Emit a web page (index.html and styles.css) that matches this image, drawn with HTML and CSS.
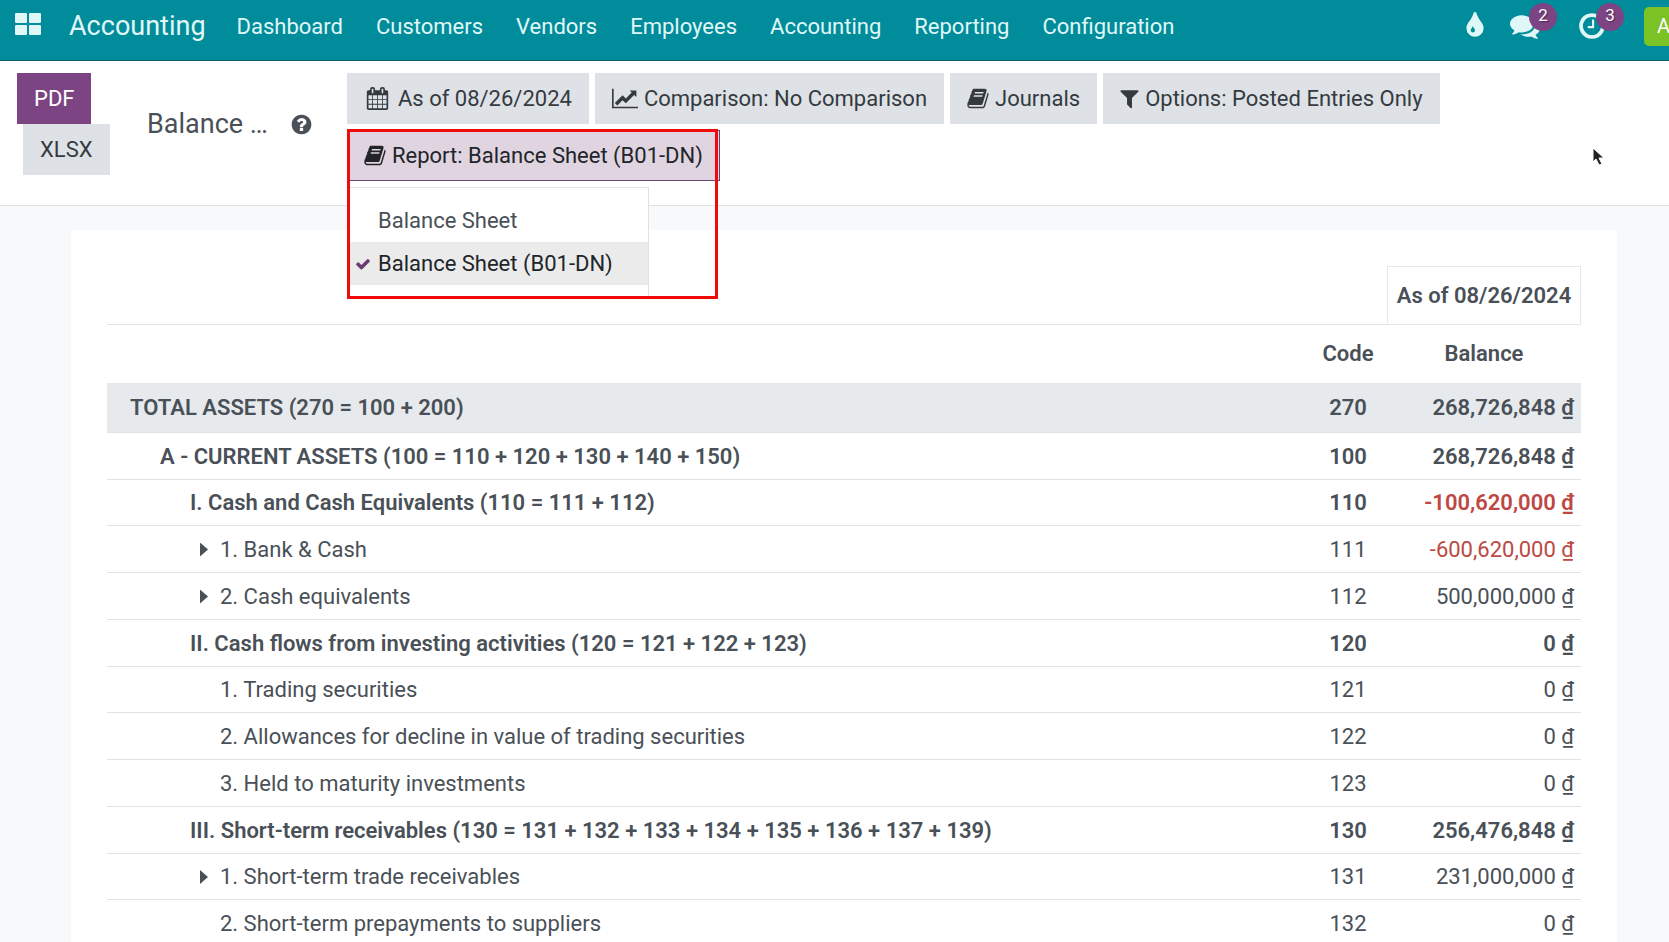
FILE: index.html
```html
<!DOCTYPE html>
<html lang="en">
<head>
    <meta charset="UTF-8">
    <meta name="viewport" content="width=device-width, initial-scale=1.0">
    <title>Balance Sheet (B01-DN)</title>
    <link rel="stylesheet" href="styles.css">
</head>
<body>
    <!-- Shared icon shapes -->
    <svg class="icon-defs" aria-hidden="true">
        <symbol id="icon-book" viewBox="60 0 1680 1792">
            <path d="M1703 478q40 57 18 129l-275 906q-19 64-76.5 107.5t-122.5 43.5h-923q-77 0-148.5-53.5t-99.5-131.5q-24-67-2-127 0-4 3-27t4-37q1-8-3-21.5t-3-19.5q2-11 8-21t16.5-23.5 16.5-23.5q23-38 45-91.5t30-91.5q3-10 .5-30t-.5-28q3-11 17-28t17-23q21-36 42-92t25-90q1-9-2.5-32t.5-28q4-13 22-30.5t22-22.5q19-26 42.5-84.5t27.5-96.5q1-8-3-25.5t-2-26.5q2-8 9-18t18-23 17-21q8-12 16.5-30.5t15-35 16-36 19.5-32 26.5-23.5 36-11.5 47.5 5.5l-1 3q38-9 51-9h761q74 0 114 56t18 130l-274 906q-36 119-71.5 153.5t-128.5 34.5h-869q-27 0-38 15-11 16-1 43 24 70 144 70h923q29 0 56-15.5t35-41.5l300-987q7-22 5-57 38 15 59 43zm-1064 2q-4 13 2 22.5t20 9.5h608q13 0 25.5-9.5t16.5-22.5l21-64q4-13-2-22.5t-20-9.5h-608q-13 0-25.5 9.5t-16.5 22.5zm-83 256q-4 13 2 22.5t20 9.5h608q13 0 25.5-9.5t16.5-22.5l21-64q4-13-2-22.5t-20-9.5h-608q-13 0-25.5 9.5t-16.5 22.5z"/>
        </symbol>
    </svg>

    <!-- Navbar -->
    <header class="navbar">
        <button class="apps-btn" aria-label="Apps">
            <svg width="26" height="22" viewBox="0 0 26 22">
                <rect x="0" y="0" width="12" height="10" rx="1"/>
                <rect x="14" y="0" width="12" height="10" rx="1"/>
                <rect x="0" y="12" width="12" height="10" rx="1"/>
                <rect x="14" y="12" width="12" height="10" rx="1"/>
            </svg>
        </button>
        <a href="#" class="brand">Accounting</a>
        <nav class="menu">
            <a href="#">Dashboard</a>
            <a href="#">Customers</a>
            <a href="#">Vendors</a>
            <a href="#">Employees</a>
            <a href="#">Accounting</a>
            <a href="#">Reporting</a>
            <a href="#">Configuration</a>
        </nav>
        <div class="systray">
            <button class="tray-btn drop-btn" aria-label="Theme">
                <svg class="tray-icon" viewBox="0 0 1792 1792"><path d="M896 1152q0-36-20-69-1-1-15.500-22.500t-25.500-38-25-44-21-50.500q-4-16-21-16t-21 16q-7 23-21 50.500t-25 44-25.500 38-15.500 22.500q-20 33-20 69 0 53 37.500 90.500t90.500 37.500 90.500-37.500 37.500-90.500zm512-128q0 212-150 362t-362 150-362-150-150-362q0-145 81-275 6-9 62.500-90.500t101-151 99.500-178 83-201.500q9-30 34-47t51-17 51.500 17 33.500 47q28 93 83 201.500t99.500 178 101 151 62.500 90.500q81 127 81 275z"/></svg>
            </button>
            <button class="tray-btn" aria-label="Messages">
                <svg class="tray-icon" viewBox="0 0 1792 1792"><path d="M1408 768q0 139-94 257t-256.500 186.500-353.500 68.500q-86 0-176-16-124 88-278 128-36 9-86 16h-3q-11 0-20.500-8t-11.500-21q-1-3-1-6.500t.5-6.500 2-6l2.500-5 3.500-5.500 4-5 4.500-5 4-4.500q5-6 23-25t26-29.500 22.500-29 25-38.500 20.500-44q-124-72-195-177t-71-224q0-139 94-257t256.500-186.500 353.500-68.500 353.500 68.500 256.500 186.500 94 257zm384 256q0 120-71 224.500t-195 176.500q10 24 20.500 44t25 38.500 22.500 29 26 29.500 23 25q1 1 4 4.500t4.500 5 4 5 3.500 5.500l2.500 5 2 6 .5 6.500-1 6.500q-3 14-13 22t-22 7q-50-7-86-16-154-40-278-128-90 16-176 16-271 0-472-132 58 4 88 4 161 0 309-45t264-129q125-92 192-212t67-254q0-77-23-152 129 71 204 178t75 230z"/></svg>
                <span class="badge">2</span>
            </button>
            <button class="tray-btn" aria-label="Activities">
                <svg class="tray-icon" viewBox="0 0 1792 1792"><path d="M1024 544v448q0 14-9 23t-23 9h-320q-14 0-23-9t-9-23v-64q0-14 9-23t23-9h224v-352q0-14 9-23t23-9h64q14 0 23 9t9 23zm416 352q0-148-73-273t-198-198-273-73-273 73-198 198-73 273 73 273 198 198 273 73 273-73 198-198 73-273zm224 0q0 209-103 385.500t-279.500 279.500-385.500 103-385.500-103-279.500-279.500-103-385.500 103-385.500 279.500-279.500 385.500-103 385.500 103 279.500 279.500 103 385.500z"/></svg>
                <span class="badge">3</span>
            </button>
            <button class="avatar" aria-label="User">A</button>
        </div>
    </header>

    <!-- Control panel -->
    <section class="control-panel">
        <div class="export-buttons">
            <button class="btn btn-primary">PDF</button>
            <button class="btn btn-xlsx">XLSX</button>
        </div>
        <div class="title">
            <h1>Balance …</h1>
            <button class="help-btn" aria-label="Help">
                <svg class="icon" viewBox="0 0 1792 1792"><path d="M1024 1376v-192q0-14-9-23t-23-9h-192q-14 0-23 9t-9 23v192q0 14 9 23t23 9h192q14 0 23-9t9-23zm256-672q0-88-55.500-163t-138.500-116-170-41q-243 0-371 213-15 24 8 42l132 100q7 6 19 6 16 0 25-12 53-68 86-92 34-24 86-24 48 0 85.500 26t37.500 59q0 38-20 61t-68 45q-63 28-115.500 86.500t-52.500 125.500v36q0 14 9 23t23 9h192q14 0 23-9t9-23q0-19 21.500-49.500t54.500-49.500q32-18 49-28.500t46-35 44.500-48 28-60.500 12.500-81zm384 192q0 209-103 385.500t-279.500 279.500-385.500 103-385.500-103-279.500-279.500-103-385.500 103-385.500 279.500-279.500 385.500-103 385.500 103 279.500 279.500 103 385.500z"/></svg>
            </button>
        </div>
        <div class="filters">
            <button class="btn btn-date">
                <svg class="icon" viewBox="0 0 1792 1792"><path d="M192 1664h288v-288h-288v288zm352 0h320v-288h-320v288zm-352-352h288v-320h-288v320zm352 0h320v-320h-320v320zm-352-384h288v-288h-288v288zm736 736h320v-288h-320v288zm-384-736h320v-288h-320v288zm768 736h288v-288h-288v288zm-384-352h320v-320h-320v320zm-352-864v-288q0-13-9.500-22.500t-22.500-9.500h-64q-13 0-22.500 9.500t-9.500 22.500v288q0 13 9.500 22.500t22.500 9.500h64q13 0 22.500-9.500t9.500-22.500zm736 864h288v-320h-288v320zm-384-384h320v-288h-320v288zm384 0h288v-288h-288v288zm32-480v-288q0-13-9.500-22.500t-22.500-9.500h-64q-13 0-22.500 9.500t-9.500 22.500v288q0 13 9.500 22.500t22.500 9.500h64q13 0 22.500-9.500t9.500-22.500zm384-64v1280q0 52-38 90t-90 38h-1408q-52 0-90-38t-38-90v-1280q0-52 38-90t90-38h128v-96q0-66 47-113t113-47h64q66 0 113 47t47 113v96h384v-96q0-66 47-113t113-47h64q66 0 113 47t47 113v96h128q52 0 90 38t38 90z"/></svg>
                As of 08/26/2024
            </button>
            <button class="btn">
                <svg class="icon icon-wide" viewBox="0 0 2048 1792"><path d="M2048 1536v128h-2048v-1536h128v1408h1920zm-128-1248v435q0 21-19.500 29.500t-35.500-7.500l-121-121-633 633q-10 10-23 10t-23-10l-233-233-416 416-192-192 585-585q10-10 23-10t23 10l233 233 464-464-121-121q-16-16-7.500-35.500t29.500-19.500h435q14 0 23 9t9 23z"/></svg>
                Comparison: No Comparison
            </button>
            <button class="btn">
                <svg class="icon icon-book"><use href="#icon-book"/></svg>
                Journals
            </button>
            <button class="btn">
                <svg class="icon icon-narrow" viewBox="160 0 1472 1792"><path d="M1595 295q17 41-14 70l-493 493v742q0 42-39 59-13 5-25 5-27 0-45-19l-256-256q-19-19-19-45v-486l-493-493q-31-29-14-70 17-39 59-39h1280q42 0 59 39z"/></svg>
                Options: Posted Entries Only
            </button>
            <div class="dropdown">
                <button class="btn btn-open" aria-expanded="true">
                    <svg class="icon icon-book"><use href="#icon-book"/></svg>
                    Report: Balance Sheet (B01-DN)
                </button>
                <div class="dropdown-menu">
                    <a href="#">Balance Sheet</a>
                    <a href="#" class="selected">
                        <svg class="check" viewBox="0 0 1792 1792"><path d="M1671 566q0 40-28 68l-724 724-136 136q-28 28-68 28t-68-28l-136-136-362-362q-28-28-28-68t28-68l136-136q28-28 68-28t68 28l294 295 656-657q28-28 68-28t68 28l136 136q28 28 28 68z"/></svg>
                        Balance Sheet (B01-DN)
                    </a>
                </div>
                <div class="highlight"></div>
            </div>
        </div>
        <svg class="cursor" width="14" height="20" viewBox="0 0 14 20" aria-hidden="true">
            <path d="M1 1v14l3-3 3 6 3-1-3-6h5z"/>
        </svg>
    </section>

    <!-- Report -->
    <main class="sheet">
        <table>
            <colgroup>
                <col>
                <col class="col-code">
                <col class="col-balance">
            </colgroup>
            <thead>
                <tr class="period">
                    <th></th>
                    <th></th>
                    <th class="period-cell">As of 08/26/2024</th>
                </tr>
                <tr class="labels">
                    <th></th>
                    <th>Code</th>
                    <th>Balance</th>
                </tr>
            </thead>
            <tbody>
                <tr class="total">
                    <td class="level-0">TOTAL ASSETS (270 = 100 + 200)</td>
                    <td>270</td>
                    <td>268,726,848 ₫</td>
                </tr>
                <tr class="bold">
                    <td class="level-1">A - CURRENT ASSETS (100 = 110 + 120 + 130 + 140 + 150)</td>
                    <td>100</td>
                    <td>268,726,848 ₫</td>
                </tr>
                <tr class="bold">
                    <td class="level-2">I. Cash and Cash Equivalents (110 = 111 + 112)</td>
                    <td>110</td>
                    <td class="negative">-100,620,000 ₫</td>
                </tr>
                <tr>
                    <td class="level-3 foldable">1. Bank &amp; Cash</td>
                    <td>111</td>
                    <td class="negative">-600,620,000 ₫</td>
                </tr>
                <tr>
                    <td class="level-3 foldable">2. Cash equivalents</td>
                    <td>112</td>
                    <td>500,000,000 ₫</td>
                </tr>
                <tr class="bold">
                    <td class="level-2">II. Cash flows from investing activities (120 = 121 + 122 + 123)</td>
                    <td>120</td>
                    <td>0 ₫</td>
                </tr>
                <tr>
                    <td class="level-3">1. Trading securities</td>
                    <td>121</td>
                    <td>0 ₫</td>
                </tr>
                <tr>
                    <td class="level-3">2. Allowances for decline in value of trading securities</td>
                    <td>122</td>
                    <td>0 ₫</td>
                </tr>
                <tr>
                    <td class="level-3">3. Held to maturity investments</td>
                    <td>123</td>
                    <td>0 ₫</td>
                </tr>
                <tr class="bold">
                    <td class="level-2">III. Short-term receivables (130 = 131 + 132 + 133 + 134 + 135 + 136 + 137 + 139)</td>
                    <td>130</td>
                    <td>256,476,848 ₫</td>
                </tr>
                <tr>
                    <td class="level-3 foldable">1. Short-term trade receivables</td>
                    <td>131</td>
                    <td>231,000,000 ₫</td>
                </tr>
                <tr>
                    <td class="level-3">2. Short-term prepayments to suppliers</td>
                    <td>132</td>
                    <td>0 ₫</td>
                </tr>
            </tbody>
        </table>
    </main>
</body>
</html>
```
FILE: styles.css
```css
* {
    margin: 0;
    padding: 0;
    box-sizing: border-box;
}

body {
    background-color: #f8f9fb;
    color: #495057;
    font-family: Roboto, sans-serif;
    font-size: 22px;
    line-height: 33px;
    height: 100vh;
    overflow: hidden;
}

button {
    font: inherit;
    color: inherit;
    background: none;
    border: none;
    cursor: pointer;
}

a {
    color: inherit;
    text-decoration: none;
}

svg {
    fill: currentColor;
}

.icon-defs {
    display: none;
}

.icon {
    width: 23px;
    height: 23px;
    flex: none;
}

.icon-wide {
    width: 26px;
}

.icon-book {
    width: 22px;
}

.icon-narrow {
    width: 19px;
}

/* Navbar */
.navbar {
    display: flex;
    align-items: center;
    height: 61px;
    padding: 0 0 8px 15px;
    background-color: #008c9a;
    border-bottom: 1px solid #0b5f68;
    color: #e0f7f8;
}

.apps-btn {
    display: flex;
    margin-right: 28px;
    padding-bottom: 5px;
}

.brand {
    font-size: 27px;
    margin-right: 31px;
}

.menu {
    display: flex;
    flex: 1;
    gap: 33px;
}

.systray {
    display: flex;
    flex: none;
    align-items: center;
    gap: 37px;
    width: 209px;
}

.tray-btn {
    display: flex;
    flex: none;
    position: relative;
}

.drop-btn {
    margin-right: -17px;
}

.tray-icon {
    width: 30px;
    height: 30px;
}

.badge {
    position: absolute;
    top: -8px;
    right: -17px;
    width: 28px;
    height: 28px;
    border-radius: 50%;
    background-color: #7c4483;
    color: #fff;
    font-size: 17px;
    line-height: 24px;
    text-align: center;
    text-shadow: 1px 1px 1px rgba(0, 0, 0, 0.4);
}

.avatar {
    flex: none;
    width: 39px;
    height: 39px;
    border-radius: 5px;
    background-color: #7bc225;
    color: #fff;
    font-size: 20px;
}

/* Control panel */
.control-panel {
    display: grid;
    grid-template-columns: 130px 200px 1fr;
    align-items: start;
    position: relative;
    padding: 12px 17px 24px;
    background-color: #fff;
    border-bottom: 1px solid #dee2e6;
}

.export-buttons {
    display: flex;
    flex-direction: column;
    align-items: flex-start;
}

.btn {
    display: flex;
    align-items: center;
    gap: 6px;
    height: 51px;
    padding: 0 17px;
    background-color: #dee2e6;
    color: #343a40;
    white-space: nowrap;
}

.btn-primary {
    background-color: #7c4483;
    color: #fff;
}

.btn-xlsx {
    margin-left: 6px;
}

.btn-date {
    gap: 9px;
    padding-left: 19px;
}

.title {
    display: flex;
    align-items: center;
    gap: 22px;
    height: 102px;
}

.title h1 {
    font-size: 27px;
    font-weight: 400;
}

.help-btn {
    display: flex;
}

.filters {
    display: flex;
    flex-wrap: wrap;
    gap: 6px;
}

/* Report picker */
.dropdown {
    position: relative;
}

.btn-open {
    background-color: #e0d4e1;
    border: 1px solid #6d4474;
    padding: 0 16px;
    color: #212529;
}

.dropdown-menu {
    position: absolute;
    top: 57px;
    left: 0;
    z-index: 1;
    width: 302px;
    padding: 11px 0;
    background-color: #fff;
    border: 1px solid #dee2e6;
}

.dropdown-menu a {
    display: flex;
    align-items: center;
    position: relative;
    height: 43px;
    padding-left: 30px;
    white-space: nowrap;
}

.dropdown-menu .selected {
    background-color: #ebebeb;
    color: #212529;
}

.check {
    position: absolute;
    left: 7px;
    width: 16px;
    height: 16px;
    color: #6b3d72;
}

.highlight {
    position: absolute;
    top: -1px;
    left: 0;
    right: 2px;
    z-index: 2;
    height: 170px;
    border: 3px solid #f00a0a;
    pointer-events: none;
}

.cursor {
    position: absolute;
    top: 86px;
    right: 63px;
    fill: #222;
    stroke: #fff;
}

/* Report */
.sheet {
    margin: 24px 52px 0 71px;
    padding: 36px;
    background-color: #fff;
}

table {
    width: 100%;
    table-layout: fixed;
    border-collapse: separate;
    border-spacing: 0;
}

.col-code {
    width: 78px;
}

.col-balance {
    width: 194px;
}

th, .bold td, .total td {
    font-weight: 600;
}

th {
    height: 59px;
    text-align: center;
    white-space: nowrap;
}

.period th {
    border-bottom: 1px solid #dee2e6;
}

.period .period-cell {
    border: 1px solid #e5e8eb;
}

.labels th {
    height: 58px;
    padding-bottom: 2px;
}

td {
    height: 47px;
    border-bottom: 1px solid #dee2e6;
    text-align: center;
    white-space: nowrap;
}

tr:nth-child(4n+3) td {
    height: 46px;
}

.total td {
    height: 50px;
    background-color: #e7eaed;
}

td:first-child {
    text-align: left;
}

td:last-child {
    padding-right: 7px;
    text-align: right;
}

.negative {
    color: #bd4843;
}

.level-0 {
    padding-left: 23px;
}

.level-1 {
    padding-left: 53px;
}

.level-2 {
    padding-left: 83px;
}

.level-3 {
    padding-left: 113px;
}

.foldable::before {
    content: "";
    display: inline-block;
    width: 8px;
    height: 14px;
    margin: 0 12px 0 -20px;
    background-color: #495057;
    clip-path: polygon(0 0, 100% 50%, 0 100%);
}
```
